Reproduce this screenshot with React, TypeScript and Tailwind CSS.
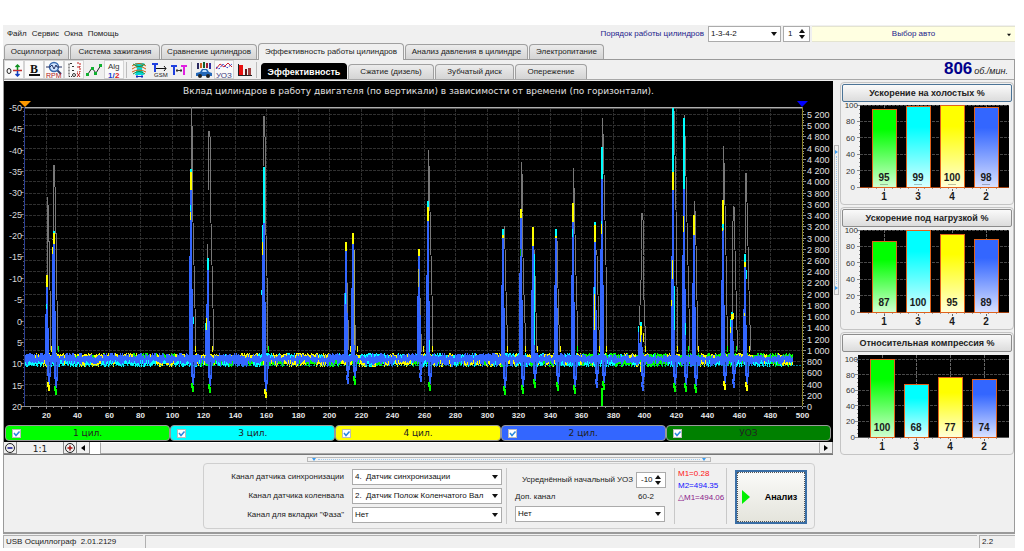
import { useState, type ReactNode } from 'react';

const GREEN = '#00ff00';
const CYAN = '#00ffff';
const YELLOW = '#ffff00';
const BLUE = '#3366ff';

/* ---------- main chart data ---------- */

type Segment = [x: number, color: string, from: number, to: number];
type Spike = {
  x: number;
  top: number; // where the blue trace starts
  bottom: number;
  tip: string;
  rpm: string; // grey rpm trace
  segments: Segment[];
};

const SPIKES: Spike[] = [
  { x: 47, top: 287, bottom: 391, tip: YELLOW, rpm: '47,287 47,197 48,205 48,241 49,241 50,290 51,350', segments: [[47, YELLOW, 275, 287], [46, CYAN, 304, 309]] },
  { x: 54, top: 244, bottom: 395, tip: GREEN, rpm: '53,240 54,165 55,187 55,233 56,233 56,275 57,300 58,350', segments: [[54, CYAN, 231, 233], [54, YELLOW, 233, 244], [52, YELLOW, 247, 254], [52, BLUE, 254, 355]] },
  { x: 191, top: 190, bottom: 392, tip: GREEN, rpm: '191,170 191,107 192,126 192,173 193,222 194,265 196,350', segments: [[191, CYAN, 169, 172], [191, YELLOW, 172, 190], [190, CYAN, 205, 211], [190, YELLOW, 212, 220], [193, CYAN, 317, 324], [189, BLUE, 290, 355]] },
  { x: 208, top: 270, bottom: 393, tip: GREEN, rpm: '207,290 208,244 208,190 209,131 210,137 210,175 211,223 212,265 214,350', segments: [[208, CYAN, 258, 270], [205, CYAN, 323, 330], [205, BLUE, 330, 355], [206, YELLOW, 318, 330], [206, BLUE, 330, 355]] },
  { x: 264, top: 223, bottom: 398, tip: YELLOW, rpm: '263,167 264,116 265,137 265,187 266,235 267,276 268,350', segments: [[264, CYAN, 167, 223], [262, CYAN, 225, 242], [262, YELLOW, 242, 255], [262, BLUE, 255, 355], [261, CYAN, 290, 295]] },
  { x: 346, top: 251, bottom: 384, tip: BLUE, rpm: '347,282 348,320 349,350', segments: [[346, YELLOW, 242, 251], [345, CYAN, 293, 304], [345, BLUE, 304, 355]] },
  { x: 353, top: 244, bottom: 385, tip: GREEN, rpm: '354,287 355,325 356,350', segments: [[353, YELLOW, 233, 244], [354, '#a8a860', 250, 345]] },
  { x: 419, top: 256, bottom: 382, tip: BLUE, rpm: '420,297 421,334 422,352', segments: [[419, YELLOW, 249, 256], [418, '#b8b850', 269, 287]] },
  { x: 428, top: 221, bottom: 391, tip: GREEN, rpm: '428,205 428,150 429,165 430,211 431,255 432,295 433,350', segments: [[428, CYAN, 201, 207], [428, YELLOW, 207, 221], [429, CYAN, 340, 352]] },
  { x: 503, top: 238, bottom: 395, tip: GREEN, rpm: '504,226 505,249 506,291 507,325 508,352', segments: [[503, CYAN, 229, 235], [503, YELLOW, 235, 238]] },
  { x: 521, top: 218, bottom: 394, tip: GREEN, rpm: '521,210 521,162 522,174 522,212 523,257 524,295 526,350', segments: [[521, YELLOW, 209, 218], [520, '#009900', 249, 256], [520, BLUE, 256, 355]] },
  { x: 533, top: 246, bottom: 388, tip: GREEN, rpm: '534,250 535,275 536,312 537,350', segments: [[533, YELLOW, 227, 246], [534, CYAN, 254, 345]] },
  { x: 556, top: 238, bottom: 391, tip: GREEN, rpm: '557,240 558,288 559,325 560,352', segments: [[556, CYAN, 229, 236], [556, YELLOW, 236, 238]] },
  { x: 573, top: 222, bottom: 394, tip: GREEN, rpm: '573,203 573,168 574,187 575,234 576,275 577,310 578,350', segments: [[573, YELLOW, 203, 222], [572, CYAN, 229, 237], [572, BLUE, 237, 355]] },
  { x: 595, top: 242, bottom: 388, tip: BLUE, rpm: '596,250 597,255 598,295 599,330 600,350', segments: [[595, CYAN, 222, 225], [595, YELLOW, 225, 242], [594, CYAN, 287, 294], [594, YELLOW, 294, 330]] },
  { x: 602, top: 179, bottom: 390, tip: GREEN, rpm: '602,150 602,118 603,133 604,174 605,220 606,265 607,350', segments: [[602, CYAN, 147, 179], [601, CYAN, 221, 224], [601, YELLOW, 224, 234], [601, BLUE, 234, 355], [602, GREEN, 388, 406]] },
  { x: 641, top: 335, bottom: 391, tip: BLUE, rpm: '639,325 640,306 641,280 641,250 642,213 643,220 643,255 644,300 646,352', segments: [[641, CYAN, 322, 326], [641, YELLOW, 326, 335], [638, CYAN, 326, 332], [638, BLUE, 332, 355], [640, YELLOW, 330, 342], [640, YELLOW, 362, 372], [643, YELLOW, 333, 342]] },
  { x: 673, top: 190, bottom: 392, tip: GREEN, rpm: '674,110 675,155 676,210 677,285 678,350', segments: [[673, CYAN, 108, 172], [673, YELLOW, 172, 190], [672, YELLOW, 260, 279], [672, BLUE, 279, 355], [674, CYAN, 286, 330], [671, YELLOW, 300, 306], [671, BLUE, 306, 355]] },
  { x: 684, top: 189, bottom: 392, tip: GREEN, rpm: '684,120 684,115 685,135 686,176 687,222 688,265 690,350', segments: [[684, CYAN, 118, 189], [683, YELLOW, 216, 232], [685, CYAN, 323, 335]] },
  { x: 694, top: 235, bottom: 393, tip: GREEN, rpm: '694,215 694,201 695,211 696,245 697,300 698,350', segments: [[694, YELLOW, 215, 235]] },
  { x: 723, top: 230, bottom: 390, tip: YELLOW, rpm: '723,200 723,146 724,162 725,205 726,255 727,315 728,350', segments: [[723, YELLOW, 200, 226], [723, CYAN, 224, 230], [722, YELLOW, 228, 231]] },
  { x: 732, top: 320, bottom: 388, tip: BLUE, rpm: '732,320 732,271 733,221 734,206 735,250 736,290 737,330 738,350', segments: [[732, CYAN, 312, 314], [732, YELLOW, 314, 320], [730, CYAN, 319, 327], [730, YELLOW, 327, 333], [730, BLUE, 333, 355], [733, YELLOW, 313, 319]] },
  { x: 745, top: 279, bottom: 391, tip: YELLOW, rpm: '745,255 746,173 747,202 748,246 749,290 750,325 751,350', segments: [[745, CYAN, 254, 262], [745, YELLOW, 262, 267], [746, CYAN, 270, 279], [745, BLUE, 267, 279], [744, YELLOW, 313, 316], [744, BLUE, 316, 355]] },
];

// Colours of the noise over and under the blue band, by stretch of the time axis
const NOISE: { until: number; over: string[]; under: string[] }[] = [
  { until: 186, over: [YELLOW, YELLOW, YELLOW, GREEN, BLUE, BLUE], under: [CYAN, CYAN, CYAN, CYAN, YELLOW] },
  { until: 215, over: [YELLOW, YELLOW, BLUE], under: [GREEN, YELLOW, CYAN] },
  { until: 256, over: [CYAN, YELLOW, YELLOW, BLUE], under: [CYAN, GREEN, BLUE, BLUE] },
  { until: 325, over: [YELLOW, YELLOW, CYAN], under: [GREEN, GREEN, YELLOW] },
  { until: 560, over: [CYAN, CYAN, CYAN, YELLOW, BLUE, BLUE], under: [YELLOW, YELLOW, GREEN, BLUE, CYAN] },
  { until: 680, over: [GREEN, GREEN, YELLOW, CYAN], under: [YELLOW, CYAN, GREEN, CYAN] },
  { until: 794, over: [GREEN, GREEN, GREEN, YELLOW], under: [CYAN, YELLOW, CYAN, GREEN, BLUE] },
];

function buildBand() {
  let seed = 7;
  const rnd = () => {
    seed = (seed * 16807) % 2147483647;
    return seed / 2147483647;
  };
  const paths: Record<string, string> = { [GREEN]: '', [CYAN]: '', [YELLOW]: '', [BLUE]: '' };
  let over = YELLOW;
  let under = CYAN;
  for (let x = 25; x < 793; x++) {
    const zone = NOISE.find(z => x < z.until)!;
    if (rnd() < 0.4) over = zone.over[Math.floor(rnd() * zone.over.length)];
    if (rnd() < 0.4) under = zone.under[Math.floor(rnd() * zone.under.length)];
    const top = 353 + Math.floor(rnd() * 3);
    const low = 364 + Math.floor(rnd() * 4);
    const from = top + 1 + Math.floor(rnd() * 3);
    const to = low - 2 - Math.floor(rnd() * 3);
    paths[over] += `M${x}.5 ${top}V${from}`;
    paths[BLUE] += `M${x}.5 ${from}V${to}`;
    paths[under] += `M${x}.5 ${to}V${low}`;
    if (rnd() < 0.08) paths[YELLOW] += `M${x}.5 ${to - 2}V${to}`;
  }
  return paths;
}

const BAND = buildBand();

const range = (n: number) => Array.from({ length: n }, (_, i) => i);
const timeX = (v: number) => Math.round(14 + v * 1.575) + 0.5;
const effY = (v: number) => Math.round(107 + (v + 50) * 4.27) + 0.5;
const rpmY = (v: number) => Math.round(406 - v * 0.05615) + 0.5;

function MainChart() {
  return (
    <svg viewBox="4 98 829 326" className="block w-full h-auto font-['Liberation_Sans'] text-[9px]">
      <g shapeRendering="crispEdges" fill="none">
        <g stroke="#303030" strokeDasharray="3 1">
          {range(26).map(i => (
            <line key={i} x1="25" x2="802" y1={rpmY((i + 1) * 200)} y2={rpmY((i + 1) * 200)} />
          ))}
          {range(24).map(i => (
            <line key={i} x1={timeX((i + 1) * 20)} x2={timeX((i + 1) * 20)} y1="109" y2="406" />
          ))}
        </g>
        <path d="M24 107.5H802" stroke="#b0b0b0" />
        <path d="M24 108.5H802" stroke="#505050" />
        <path d="M22 406.5H802" stroke="#909090" />
        {/* scale ticks */}
        <g stroke="#909090">
          {range(15).map(i => (
            <line key={i} x1="21" x2="24" y1={effY(i * 5 - 50)} y2={effY(i * 5 - 50)} />
          ))}
          {range(70).map(i => (
            <line key={i} x1="23" x2="24" y1={effY(i - 50)} y2={effY(i - 50)} stroke="#606060" />
          ))}
          {range(99).map(i => (
            <line key={i} x1={timeX(i * 5 + 10)} x2={timeX(i * 5 + 10)} y1="407" y2={i % 2 ? 408 : 409} />
          ))}
          {range(27).map(i => (
            <line key={i} x1="803" x2="806" y1={rpmY(i * 200)} y2={rpmY(i * 200)} />
          ))}
          {range(106).map(i => (
            <line key={i} x1="803" x2="804" y1={rpmY(i * 50)} y2={rpmY(i * 50)} />
          ))}
        </g>
        <path d="M24.5 107V406" stroke="#2b3f94" />
        <path d="M802.5 107V406" stroke="#8a8427" />

        {SPIKES.map(s => (
          <polyline key={s.x} points={s.rpm} stroke="#787878" />
        ))}
        {Object.entries(BAND).map(([color, d]) => (
          <path key={color} d={d} stroke={color} />
        ))}
        {SPIKES.map(s => (
          <g key={s.x}>
            <path
              d={`M${s.x - 1} 350L${s.x + 1} ${s.bottom - 6}L${s.x + 2} ${s.bottom - 3}L${s.x + 4} ${s.bottom - 18}L${s.x + 5} 358Z`}
              fill={BLUE}
            />
            <path d={`M${s.x + 1} ${s.bottom - 9}V${s.bottom - 4}M${s.x + 2} ${s.bottom - 6}V${s.bottom}`} stroke={s.tip} strokeWidth="2" />
            <path d={`M${s.x + 2.5} 362V${s.bottom - 18}`} stroke="#1d3a94" />
            {/* the trace is wider towards its foot */}
            <path d={`M${s.x} ${s.top}V358`} stroke={BLUE} strokeWidth="2" />
            <path d={`M${s.x - 1.5} ${Math.round(s.top * 0.6 + 142)}V358`} stroke={BLUE} />
            <path d={`M${s.x + 1.5} ${Math.round(s.top * 0.4 + 213)}V358`} stroke={BLUE} />
            {s.segments.map(([x, color, from, to]) => (
              <path
                key={`${x}-${from}`}
                d={x === s.x ? `M${x} ${from}V${to}` : `M${x + 0.5} ${from}V${to}`}
                stroke={color}
                strokeWidth={x === s.x ? 2 : 1}
              />
            ))}
            <path d={`M${s.x + 4.5} 346V352`} stroke={s.x % 3 ? YELLOW : GREEN} />
          </g>
        ))}
        <path d="M25 365.5H802" stroke="#00b4c8" strokeDasharray="2 1" opacity="0.7" />
      </g>

      <path d="M19 101H31L25 107Z" fill="#ff9900" />
      <path d="M797 101H808L802 107Z" fill="#0000ff" />

      <g fill="#d8d8d8" textAnchor="end">
        {range(15).map(i => (
          <text key={i} x="22" y={effY(i * 5 - 50) + 3}>{i * 5 - 50}</text>
        ))}
      </g>
      <g fill="#e8e8e8" textAnchor="middle" className="font-bold text-[8px]">
        {range(25).map(i => (
          <text key={i} x={timeX(i * 20 + 20)} y="418">{i * 20 + 20}</text>
        ))}
      </g>
      <g fill="#e0e0e0" className="text-[9px]">
        {range(27).map(i => (
          <text key={i} x="807" y={rpmY(i * 200) + 3}>
            {i < 5 ? i * 200 : `${Math.floor(i / 5)} ${String((i * 200) % 1000).padStart(3, '0')}`}
          </text>
        ))}
      </g>
    </svg>
  );
}

/* ---------- side bar charts ---------- */

const CYLINDERS = [
  { name: '1', color: GREEN, light: '#d0ffd0' },
  { name: '3', color: CYAN, light: '#d8ffff' },
  { name: '4', color: YELLOW, light: '#ffffd8' },
  { name: '2', color: BLUE, light: '#d8e0ff' },
];

function BarPanel({ title, values, headroom = 0, active }: {
  title: string; values: number[]; headroom?: number; active?: boolean;
}) {
  const left = headroom ? 16 : 18;
  const scale = (82 - headroom) / 100;
  const y = (v: number) => 85 - v * scale;
  const barX = (i: number) => (headroom ? 28 + i * 34 : 30 + i * 34);
  return (
    <section className="rounded-sm border border-[#c4c4c4] p-px">
      <button
        className={
          'block w-full h-[18px] rounded-xs border bg-linear-to-b from-[#fafafa] to-[#dcdcdc] font-bold text-[9px] leading-4 text-[#222] ' +
          (active ? 'border-[#4a7396]' : 'border-[#8c8c8c]')
        }
      >
        {title}
      </button>
      <svg viewBox="0 0 170 101" className="block w-full h-auto font-['Liberation_Sans'] text-[9px]">
        <defs>
          {CYLINDERS.map(c => (
            <linearGradient key={c.name} id={`cyl-${c.name}`} x1="0" y1="0" x2="0" y2="1">
              <stop offset="0.25" stopColor={c.color} />
              <stop offset="1" stopColor={c.light} />
            </linearGradient>
          ))}
        </defs>
        <g shapeRendering="crispEdges">
          <rect x={left} y="3" width={167 - left} height="82" fill="#000" />
          {range(6).map(i => (
            <g key={i}>
              <line x1={left} x2="167" y1={y(i * 20)} y2={y(i * 20)} stroke="#484848" strokeDasharray="3 1" />
              <line x1={left - 3} x2={left} y1={y(i * 20)} y2={y(i * 20)} stroke="#888" />
            </g>
          ))}
          {range(20).map(i => (
            <line key={i} x1={left - 1} x2={left} y1={y(i * 5)} y2={y(i * 5)} stroke="#888" />
          ))}
          {range(17).map(i => (
            <line key={i} x1={26.5 + i * 8} x2={26.5 + i * 8} y1="86" y2="87" stroke="#999" />
          ))}
          <rect x={left} y="85" width={167 - left} height="1" fill={headroom ? '#555' : '#a04010'} />
          {values.map((v, i) => {
            const top = Math.round(y(v));
            return (
              <g key={i}>
                <line x1={barX(i) + 12.5} x2={barX(i) + 12.5} y1="3" y2="89" stroke="#666" strokeDasharray="3 1" />
                {/* outline first, the gradient fill sits one pixel inside it */}
                <rect x={barX(i)} y={top} width="25" height={86 - top} fill="#e0621c" />
                <rect x={barX(i) + 1} y={top + 1} width="23" height={84 - top} fill={`url(#cyl-${CYLINDERS[i].name})`} />
                {active && <rect x={barX(i) + 8} y="82" width="8" height="1" fill="#000" opacity="0.25" />}
              </g>
            );
          })}
        </g>
        <g fill="#333" textAnchor="end" className="text-[8px]">
          {range(6).map(i => (
            <text key={i} x={i === 5 ? 16 : 13} y={y(i * 20) + 3}>{i * 20}</text>
          ))}
        </g>
        <g fill="#1a1a1a" textAnchor="middle" className="font-bold text-[10px]">
          {values.map((v, i) => (
            <g key={i}>
              <text x={barX(i) + 12} y="79">{v}</text>
              <text x={barX(i) + 12} y="98">{CYLINDERS[i].name}</text>
            </g>
          ))}
        </g>
      </svg>
    </section>
  );
}

/* ---------- toolbar ---------- */

function Icon({ children }: { children: ReactNode }) {
  return (
    <svg viewBox="0 0 18 18" className="block size-[18px] font-['Liberation_Sans'] font-bold">
      {children}
    </svg>
  );
}

type Tool = { title: string; checked?: boolean; icon: ReactNode } | null;

const TOOLS: Tool[] = [
  {
    title: 'Нулевая линия', checked: true,
    icon: <>
      <ellipse cx="4" cy="10" rx="2" ry="2.5" fill="none" stroke="#222" />
      <path d="M8 9.5H17" stroke="#c03030" strokeWidth="1.5" />
      <path d="M12.500 4V9M10.500 6L12.500 4L14.500 6" stroke="#109020" strokeWidth="1.5" fill="none" />
      <path d="M12.500 10V15M10.500 13L12.500 15L14.500 13" stroke="#1040c0" strokeWidth="1.5" fill="none" />
    </>,
  },
  {
    title: 'Жирные линии', checked: true,
    icon: <>
      <text x="5" y="12" fontSize="12" fill="#111" className="font-['Liberation_Serif']">B</text>
      <path d="M4 14H15" stroke="#111" strokeWidth="2" />
    </>,
  },
  {
    title: 'Обороты', checked: true,
    icon: <>
      <path d="M12 9L16 13" stroke="#304070" strokeWidth="2" />
      <circle cx="9" cy="6" r="4.5" fill="#cfe4ff" stroke="#3a6ab0" strokeWidth="1.5" />
      <path d="M1 6H5L7 4L9 8L11 4L12 6H17" stroke="#222f60" fill="none" />
      <text x="1" y="17" fontSize="7" fill="#b02020" fontWeight="400">RPM</text>
    </>,
  },
  {
    title: 'Шкала', checked: true,
    icon: <>
      <path d="M7 2.500H4V15.500H7" stroke="#333" fill="none" strokeDasharray="2 1" />
      <path d="M7 5.500H9M7 9.500H9" stroke="#333" />
      <path d="M12 2H15V6H12M13 6H15V11H12" stroke="#c02020" fill="none" strokeDasharray="2 1" />
      <circle cx="9" cy="14" r="1.500" stroke="#333" fill="none" />
      <path d="M12 12L15 16M15 12L12 16" stroke="#c02020" />
    </>,
  },
  {
    title: 'Линия',
    icon: <>
      <path d="M3 13L7 7L11 12L16 4" stroke="#222" fill="none" />
      <g fill="#10b030">
        <rect x="1" y="12" width="3" height="3" />
        <rect x="6" y="6" width="3" height="3" />
        <rect x="9" y="11" width="3" height="3" />
        <rect x="14" y="3" width="3" height="3" />
      </g>
    </>,
  },
  {
    title: 'Алгоритм', checked: true,
    icon: <>
      <text x="3" y="8" fontSize="8" fill="#333" fontWeight="400">Alg</text>
      <text x="3" y="17" fontSize="8" fill="#2040d0">1/</text>
      <text x="10" y="17" fontSize="8" fill="#e02020">2</text>
    </>,
  },
  null,
  {
    title: 'Фазы',
    icon: <>
      <path d="M5 2H14L12 8L14 14H5L7 8Z" fill="#00d8d8" />
      <path d="M2 5Q9 0 16 5M2 8Q9 3 16 8M2 11Q9 7 16 11" stroke="#d06010" fill="none" />
      <path d="M3 3Q9 8 15 3M3 13Q9 8 15 13" stroke="#109040" fill="none" />
      <path d="M6 15.500H13M7 14V17M12 14V17" stroke="#1030c0" />
    </>,
  },
  {
    title: 'Метка синхронизации',
    icon: <>
      <path d="M2 3H8M5 3V11" stroke="#2040e0" strokeWidth="2" />
      <path d="M6 7.500H16M14 5L16 7.500L14 10" stroke="#111" fill="none" />
      <text x="4" y="16" fontSize="6" fill="#222" fontWeight="400">GSM</text>
    </>,
  },
  {
    title: 'Расстояние меток',
    icon: <>
      <path d="M1 5H7M4 5V14" stroke="#2040e0" strokeWidth="2" />
      <path d="M11 5H17M14 5V14" stroke="#e020e0" strokeWidth="2" />
      <path d="M6 9.500H12M7 8V11M11 8V11" stroke="#333" />
    </>,
  },
  null,
  {
    title: 'Диаграмма авто',
    icon: <>
      <path d="M3 2V8" stroke="#2a2a60" strokeWidth="2" />
      <path d="M6 2V7" stroke="#d06020" strokeWidth="2" />
      <path d="M9 1V7" stroke="#106030" strokeWidth="2" />
      <path d="M12 2V7" stroke="#a02030" strokeWidth="2" />
      <path d="M15 2V8" stroke="#3030a0" strokeWidth="2" />
      <path d="M1 12L5 11L7 8H12L14 11L17 12V15H1Z" fill="#2468b8" />
      <path d="M7 11L8 9H11L12 11Z" fill="#bfe0ff" />
      <circle cx="5" cy="15" r="2" fill="#222" />
      <circle cx="13" cy="15" r="2" fill="#222" />
    </>,
  },
  {
    title: 'УОЗ', checked: true,
    icon: <>
      <path d="M1 8L5 3L9 6L13 2L17 6" stroke="#d02030" fill="none" />
      <path d="M1 6L4 8L8 3L12 7L17 3" stroke="#3040d0" fill="none" strokeDasharray="2 1" />
      <text x="1" y="17" fontSize="8" fill="#3a3a80" fontWeight="400">УОЗ</text>
    </>,
  },
  {
    title: 'Столбцы',
    icon: <>
      <rect x="4" y="4" width="4" height="10" fill="#e81010" />
      <rect x="10" y="8" width="2" height="6" fill="#601818" />
      <rect x="13" y="7" width="3" height="7" fill="#a04040" />
      <path d="M3.500 3V15M3 14.500H17" stroke="#222" />
    </>,
  },
  null,
];

function Toolbar() {
  return (
    <div className="flex items-center">
      {TOOLS.map((t, i) =>
        t ? (
          <button
            key={i}
            title={t.title}
            aria-label={t.title}
            className={
              'flex items-center justify-center w-5 h-[19px] border ' +
              (t.checked ? 'border-[#d4d4d4] bg-[#fafafa]' : 'border-transparent')
            }
          >
            <Icon>{t.icon}</Icon>
          </button>
        ) : (
          <span key={i} className="w-px h-4 mx-0.5 bg-[#bdbdbd]" />
        ),
      )}
    </div>
  );
}

/* ---------- controls ---------- */

function Select({ id, value, options, className }: { id: string; value: string; options?: string[]; className: string }) {
  return (
    <div className={'relative ' + className}>
      <select id={id} defaultValue={value} className="block w-full h-4 appearance-none border border-[#ababab] bg-white pl-0.5 pr-3 leading-3 text-[#111]">
        {(options ?? [value]).map(o => <option key={o}>{o}</option>)}
      </select>
      <svg viewBox="0 0 6 4" className="absolute right-1 top-1.5 w-1.5 h-1 pointer-events-none">
        <path d="M0 0H6L3 4Z" fill="#111" />
      </svg>
    </div>
  );
}

function Spinner({ id, value, className }: { id: string; value: string; className: string }) {
  return (
    <div className={'flex h-4 border border-[#ababab] bg-white ' + className}>
      <input id={id} defaultValue={value} className="w-full min-w-0 pl-1 text-[#111] outline-none" />
      <div className="flex flex-col justify-center gap-0.5 pr-1">
        <button aria-label="Больше"><svg viewBox="0 0 6 4" className="block w-1.5 h-1"><path d="M0 4H6L3 0Z" fill="#111" /></svg></button>
        <button aria-label="Меньше"><svg viewBox="0 0 6 4" className="block w-1.5 h-1"><path d="M0 0H6L3 4Z" fill="#111" /></svg></button>
      </div>
    </div>
  );
}

const MENU = ['Файл', 'Сервис', 'Окна', 'Помощь'];

const TABS = [
  { label: 'Осциллограф', width: 'w-[65px]' },
  { label: 'Система зажигания', width: 'w-[90px]' },
  { label: 'Сравнение цилиндров', width: 'w-[96px]' },
  { label: 'Эффективность работы цилиндров', width: 'w-[146px]' },
  { label: 'Анализ давления в цилиндре', width: 'w-[123px]' },
  { label: 'Электропитание', width: 'w-[75px]' },
];

const SUB_TABS = [
  { label: 'Эффективность', width: 'w-[86px]' },
  { label: 'Сжатие (дизель)', width: 'w-[86px]' },
  { label: 'Зубчатый диск', width: 'w-[79px]' },
  { label: 'Опережение', width: 'w-[72px]' },
];

const LEGEND = [
  { label: '1 цил.', style: 'bg-[#00ff00]' },
  { label: '3 цил.', style: 'bg-[#00ffff]' },
  { label: '4 цил.', style: 'bg-[#ffff00]' },
  { label: '2 цил.', style: 'bg-[#3366ff]' },
  { label: 'УОЗ', style: 'bg-[#008000]' },
];

function Header() {
  return (
    <header className="flex items-center h-[18px] pl-1">
      <nav className="flex gap-[5px]">
        {MENU.map(m => <button key={m}>{m}</button>)}
      </nav>
      <div className="flex-1" />
      <label htmlFor="order" className="text-[#1c1c8c] mr-1">Порядок работы цилиндров</label>
      <Select id="order" value="1-3-4-2" options={['1-3-4-2', '1-2-4-3']} className="w-[73px]" />
      <Spinner id="cylinder" value="1" className="w-[27px] mx-0.5" />
      <button className="relative w-[203px] h-4 bg-[#ffffe1] text-[#1c1c8c] border-y border-[#e4e4d0] leading-3">
        Выбор авто
        <svg viewBox="0 0 6 4" className="absolute right-1 top-1.5 w-1 h-1"><path d="M0 0H6L3 4Z" fill="#111" /></svg>
      </button>
    </header>
  );
}

function Legend() {
  return (
    <div className="grid grid-cols-5 p-px pr-0.5">
      {LEGEND.map(l => (
        <label
          key={l.label}
          className={'relative flex items-center justify-center h-4 rounded-sm border border-[#999] font-["DejaVu_Sans"] text-[9px] text-[#222] ' + l.style}
        >
          <input type="checkbox" defaultChecked className="peer absolute left-1.5 size-[9px] appearance-none bg-white border border-[#bbb]" />
          <svg viewBox="0 0 9 9" className="absolute left-1.5 size-[9px] hidden peer-checked:block pointer-events-none">
            <path d="M2 4L4 6.500L7.500 2.500" stroke="#2a8ae0" strokeWidth="1.500" fill="none" />
          </svg>
          {l.label}
        </label>
      ))}
    </div>
  );
}

function ScrollRow() {
  const cell = 'flex items-center justify-center h-[12px] w-[13px] border-r border-b border-[#8a8a8a] bg-[#f0f0f0]';
  return (
    <div className="flex h-[13px] border-b border-[#777] bg-[#f0f0f0]">
      <button aria-label="Уменьшить" className={cell}>
        <svg viewBox="0 0 10 10" className="size-[10px]"><circle cx="5" cy="5" r="4.500" fill="none" stroke="#222" /><path d="M2.500 5H7.500" stroke="#10108c" strokeWidth="1.500" /></svg>
      </button>
      <span className='w-[47px] text-center text-[9px] leading-[14px] border-r border-[#8a8a8a] font-["DejaVu_Sans"]'>1:1</span>
      <button aria-label="Увеличить" className={cell}>
        <svg viewBox="0 0 10 10" className="size-[10px]"><circle cx="5" cy="5" r="4.500" fill="none" stroke="#222" /><path d="M2.500 5H7.500M5 2.500V7.500" stroke="#a01010" strokeWidth="1.500" /></svg>
      </button>
      <button aria-label="Влево" className={cell}>
        <svg viewBox="0 0 4 6" className="w-1 h-1.5"><path d="M4 0V6L0 3Z" /></svg>
      </button>
      <div className="flex-1 flex bg-white pl-2.5">
        <div className="flex-1 h-[12px] border border-[#a8a8a8] border-t-white bg-[#f0f0f0]" />
      </div>
      <button aria-label="Вправо" className={cell}>
        <svg viewBox="0 0 4 6" className="w-1 h-1.5"><path d="M0 0V6L4 3Z" /></svg>
      </button>
    </div>
  );
}

function Settings() {
  return (
    <form className="mx-auto w-[612px] h-[66px] flex rounded-sm border border-[#cfcfcf] py-1 whitespace-nowrap" onSubmit={e => e.preventDefault()}>
      <div className="w-[303px] grid grid-cols-[1fr_150px] gap-x-2 gap-y-[3px] items-center content-center justify-items-end pr-1 border-r border-[#c8c8c8]">
        <label htmlFor="sync">Канал датчика синхронизации</label>
        <Select id="sync" value={'4.\u00a0 Датчик синхронизации'} className="w-full" />
        <label htmlFor="crank">Канал датчика коленвала</label>
        <Select id="crank" value={'2.\u00a0 Датчик Полож Коленчатого Вал'} className="w-full" />
        <label htmlFor="phase">Канал для вкладки "Фаза"</label>
        <Select id="phase" value="Нет" className="w-full" />
      </div>
      <div className="w-[168px] px-2 pt-1 border-r border-[#c8c8c8]">
        <div className="flex items-center justify-end gap-[3px]">
          <label htmlFor="uoz">Усреднённый начальный УОЗ</label>
          <Spinner id="uoz" value="-10" className="w-[30px]" />
        </div>
        <div className="flex justify-between items-center h-[18px] pr-3">
          <label htmlFor="extra">Доп. канал</label>
          <span>60-2</span>
        </div>
        <Select id="extra" value="Нет" className="w-[150px]" />
      </div>
      <div className="w-[52px] pl-[3px] leading-3 border-r border-[#c8c8c8]">
        <div className="text-[#ff1010]">M1=0.28</div>
        <div className="text-[#1010ff]">M2=494.35</div>
        <div className="text-[#8a1a8a]">△M1=494.06</div>
      </div>
      <button className="ml-2 mt-0.5 flex items-center w-[72px] h-[54px] border-2 border-[#3a6ea5] bg-linear-to-b from-[#fafaf8] to-[#e4e4dc] p-px outline-1 -outline-offset-3 outline-dotted outline-[#555]">
        <svg viewBox="0 0 8 14" className="ml-1 w-2 h-3.5"><path d="M0 0L8 7L0 14Z" fill="#00f000" /></svg>
        <span className="flex-1 pl-2 text-center font-bold text-[9px] text-black">Анализ</span>
      </button>
    </form>
  );
}

export default function App() {
  const [tab, setTab] = useState(3);
  const [subTab, setSubTab] = useState(0);

  return (
    <div className='min-h-screen bg-white pt-[25px] pl-[3px] pr-[9px] pb-[3px] font-["Liberation_Sans",sans-serif] text-[8px] leading-3 text-[#222]'>
      <div className="bg-[#f0f0f0]">
        <Header />

        {/* Main tabs */}
        <nav className="flex items-end h-4 pl-px">
          {TABS.map((t, i) => (
            <button
              key={t.label}
              onClick={() => setTab(i)}
              className={
                'mr-px rounded-t-sm border border-b-0 border-[#a0a0a0] whitespace-nowrap ' + t.width +
                (i === tab ? ' relative h-[17px] bg-[#f0f0f0] -mb-px pb-px' : ' h-[15px] bg-linear-to-b from-[#ececec] to-[#d4d4d4]')
              }
            >
              {t.label}
            </button>
          ))}
        </nav>

        <div className="border border-[#9a9a9a] border-b-2">
          {/* Toolbar, sub-tabs and the rpm readout */}
          <div className="flex items-end h-5 border-b border-[#a8a8a8]">
            <Toolbar />
            <nav className="flex items-end ml-0.5">
              {SUB_TABS.map((t, i) => (
                <button
                  key={t.label}
                  onClick={() => setSubTab(i)}
                  className={
                    'mr-px rounded-t-sm border border-b-0 whitespace-nowrap ' + t.width +
                    (i === subTab
                      ? ' h-4 bg-black border-black text-white text-[9px] font-bold'
                      : ' h-[15px] border-[#a0a0a0] bg-linear-to-b from-[#ececec] to-[#d4d4d4]')
                  }
                >
                  {t.label}
                </button>
              ))}
            </nav>
            <div className="flex-1" />
            <div className="flex items-baseline gap-0.5 pr-1.5">
              <span className="font-bold text-[17px] leading-5 text-[#00008b]">806</span>
              <span className="italic text-[9px]">об./мин.</span>
            </div>
          </div>

          <div className="flex pt-px">
            {/* Main chart */}
            <div className="flex-1 min-w-0">
              <div className="bg-black">
                <h1 className='h-[17px] pt-1 text-center font-["DejaVu_Sans"] text-[9px] leading-3 text-[#e0e0e0]'>
                  Вклад цилиндров в работу двигателя (по вертикали) в зависимости от времени (по горизонтали).
                </h1>
                <MainChart />
                <Legend />
              </div>
              <ScrollRow />
            </div>

            <div className="flex items-center w-[7px] pb-24 pl-px">
              <div className="flex flex-col items-center justify-between w-[5px] h-[150px] py-1 border border-[#b8b8b8]">
                <svg viewBox="0 0 3 4" className="w-[3px] h-1"><path d="M0 0L3 2L0 4Z" fill="#3a9cf0" /></svg>
                <span className="flex-1 my-0.5 border-l border-dotted border-[#9cc8ee]" />
                <svg viewBox="0 0 3 4" className="w-[3px] h-1"><path d="M0 0L3 2L0 4Z" fill="#3a9cf0" /></svg>
              </div>
            </div>

            {/* Bar charts */}
            <aside className="w-[174px] flex flex-col gap-0.5 pt-px">
              <BarPanel title="Ускорение на холостых %" values={[95, 99, 100, 98]} active />
              <BarPanel title="Ускорение под нагрузкой %" values={[87, 100, 95, 89]} />
              <BarPanel title="Относительная компрессия %" values={[100, 68, 77, 74]} headroom={4} />
            </aside>
          </div>

          <div className="flex items-center h-2">
            <div className="mx-auto flex items-center justify-between w-2/5 h-[5px] px-1 border border-[#b8b8b8]">
              <svg viewBox="0 0 4 3" className="w-1 h-[3px]"><path d="M0 0H4L2 3Z" fill="#3a9cf0" /></svg>
              <span className="flex-1 mx-0.5 border-t border-dotted border-[#9cc8ee]" />
              <svg viewBox="0 0 4 3" className="w-1 h-[3px]"><path d="M0 0H4L2 3Z" fill="#3a9cf0" /></svg>
            </div>
          </div>

          <Settings />
          <div className="h-[3px]" />
        </div>

        {/* Status bar */}
        <footer className="flex gap-0.5 h-[14px] pt-px whitespace-nowrap">
          <div className="w-[140px] pl-0.5 border-t border-l border-[#b0b0b0]">USB Осциллограф&nbsp; 2.01.2129</div>
          <div className="flex-1 border-t border-l border-[#b0b0b0]" />
          <div className="w-9 pl-0.5 border-t border-l border-[#b0b0b0]">2.2</div>
        </footer>
      </div>
    </div>
  );
}
